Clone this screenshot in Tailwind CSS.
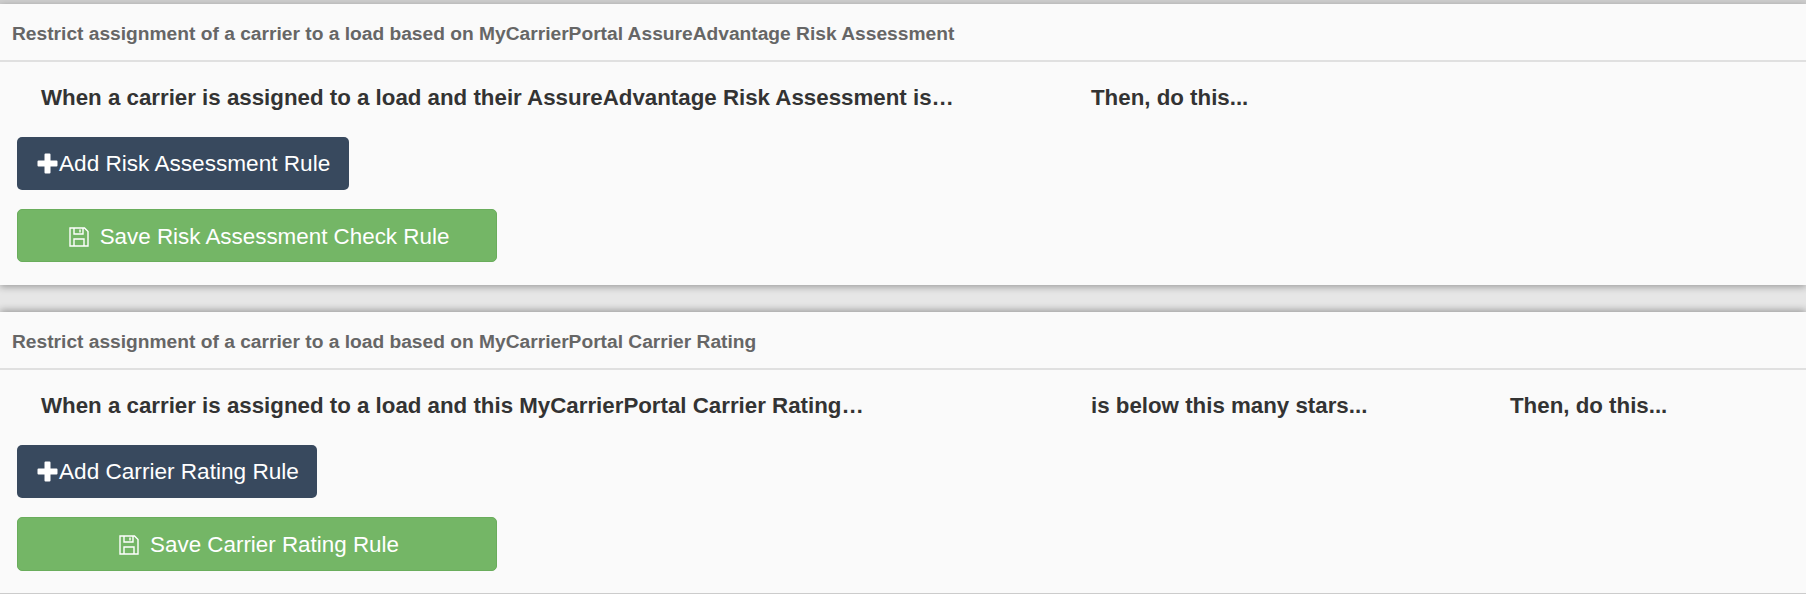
<!DOCTYPE html>
<html lang="en">
  <head>
    <meta charset="UTF-8" />
    <title>Carrier Rules</title>
    <script src="https://cdn.jsdelivr.net/npm/@tailwindcss/browser@4"></script>
  </head>
  <body class="h-[594px] overflow-hidden bg-[#e6e6e6] font-['Liberation_Sans',Arial,sans-serif]">
    <div class="h-[4px] bg-[#cfcfcf]"></div>

    <!-- risk assessment -->
    <section class="h-[281px] bg-[#fafafa] shadow-[0_2px_7px_rgba(0,0,0,0.32)] relative">
      <h2 class="h-[58px] pl-[12px] pt-[4px] border-b-2 border-[#e0e0e0] flex items-center text-[19.2px] font-bold text-[#666666]">
        Restrict assignment of a carrier to a load based on MyCarrierPortal AssureAdvantage Risk Assessment
      </h2>
      <div class="h-[75px] pb-[3px] flex items-center text-[22.3px] font-bold text-[#333333]">
        <span class="pl-[41px] w-[1091px]">When a carrier is assigned to a load and their AssureAdvantage Risk Assessment is…</span>
        <span>Then, do this...</span>
      </div>
      <button class="ml-[17px] h-[53px] w-[332px] pl-[20px] gap-[1px] flex items-center rounded-[5px] bg-[#38495e] text-[22.6px] text-white">
        <svg class="w-[21px] h-[21px]" viewBox="0 0 21 21" fill="#fff"><path d="M7.5 1.5a1 1 0 0 1 1-1h4a1 1 0 0 1 1 1v6h6a1 1 0 0 1 1 1v4a1 1 0 0 1-1 1h-6v6a1 1 0 0 1-1 1h-4a1 1 0 0 1-1-1v-6h-6a1 1 0 0 1-1-1v-4a1 1 0 0 1 1-1h6z"/></svg>
        Add Risk Assessment Rule
      </button>
      <button class="mt-[19px] ml-[17px] pl-[4px] pt-[2px] h-[53px] w-[480px] flex items-center justify-center gap-[11px] rounded-[5px] bg-[#74b666] border border-[#6aad5c] text-[22.4px] text-white">
        <svg class="w-[20px] h-[20px]" viewBox="0 0 20 20" fill="none" stroke="#fff" stroke-width="1.4"><path d="M1 1h14.5L19 4.5V19H1z"/><path d="M5 1v6h9V1M11 2.5v3M5 19v-7h10v7"/></svg>
        Save Risk Assessment Check Rule
      </button>
    </section>

    <div class="h-[27px]"></div>

    <!-- carrier rating -->
    <section class="h-[282px] bg-[#fafafa] border-b border-[#cccccc] shadow-[0_-2px_7px_rgba(0,0,0,0.32)] relative">
      <h2 class="h-[58px] pl-[12px] pt-[4px] border-b-2 border-[#e0e0e0] flex items-center text-[19.2px] font-bold text-[#666666]">
        Restrict assignment of a carrier to a load based on MyCarrierPortal Carrier Rating
      </h2>
      <div class="h-[75px] pb-[3px] flex items-center text-[22.3px] font-bold text-[#333333]">
        <span class="pl-[41px] w-[1091px]">When a carrier is assigned to a load and this MyCarrierPortal Carrier Rating…</span>
        <span class="w-[419px]">is below this many stars...</span>
        <span>Then, do this...</span>
      </div>
      <button class="ml-[17px] h-[53px] w-[300px] pl-[20px] gap-[1px] flex items-center rounded-[5px] bg-[#38495e] text-[22.6px] text-white">
        <svg class="w-[21px] h-[21px]" viewBox="0 0 21 21" fill="#fff"><path d="M7.5 1.5a1 1 0 0 1 1-1h4a1 1 0 0 1 1 1v6h6a1 1 0 0 1 1 1v4a1 1 0 0 1-1 1h-6v6a1 1 0 0 1-1 1h-4a1 1 0 0 1-1-1v-6h-6a1 1 0 0 1-1-1v-4a1 1 0 0 1 1-1h6z"/></svg>
        Add Carrier Rating Rule
      </button>
      <button class="mt-[19px] ml-[17px] pl-[4px] pt-[2px] h-[54px] w-[480px] flex items-center justify-center gap-[11px] rounded-[5px] bg-[#74b666] border border-[#6aad5c] text-[22.4px] text-white">
        <svg class="w-[20px] h-[20px]" viewBox="0 0 20 20" fill="none" stroke="#fff" stroke-width="1.4"><path d="M1 1h14.5L19 4.5V19H1z"/><path d="M5 1v6h9V1M11 2.5v3M5 19v-7h10v7"/></svg>
        Save Carrier Rating Rule
      </button>
    </section>
  </body>
</html>
